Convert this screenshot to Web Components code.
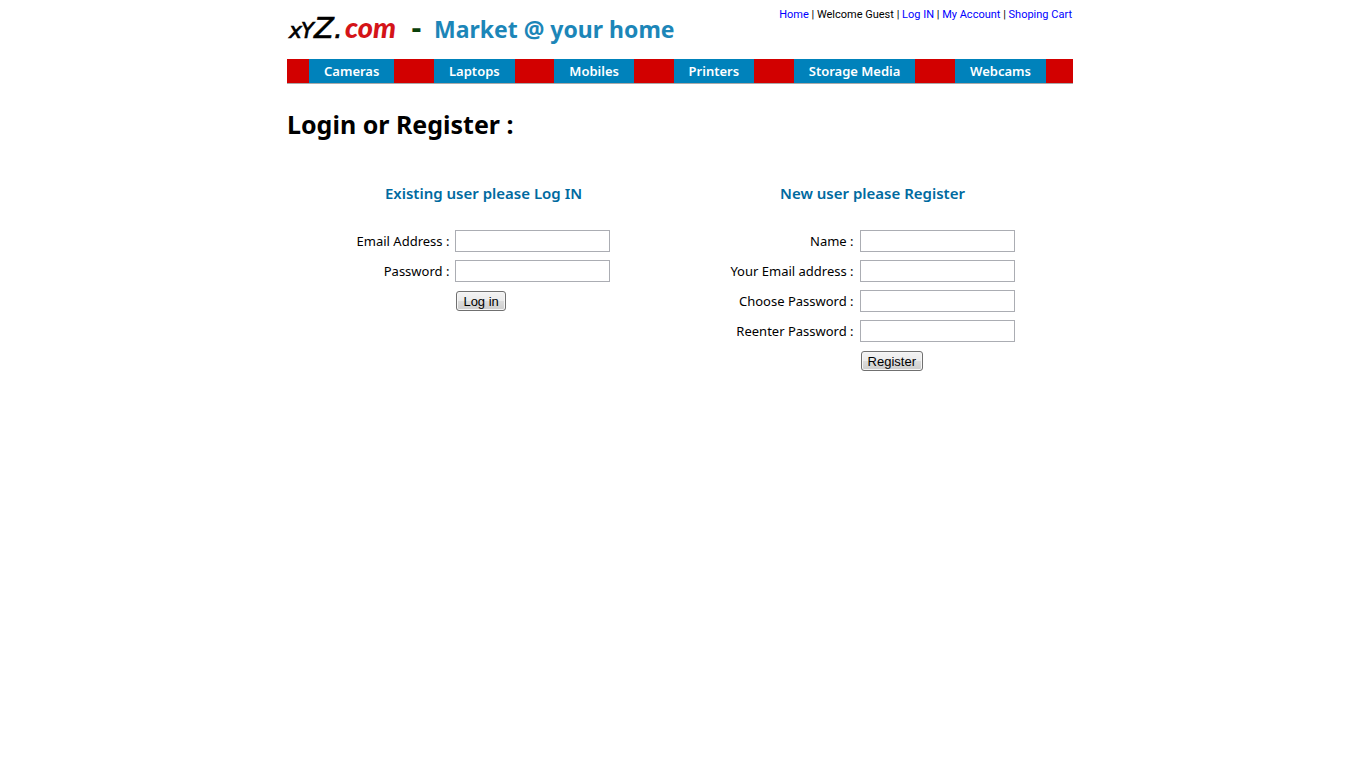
<!DOCTYPE html>
<html lang="en">
<head>
<meta charset="utf-8">
<title>xyZ.com - Login or Register</title>
<style>
body { margin: 0; background: #fff; color: #000; font: 13px/20px "Noto Sans", "Open Sans", sans-serif; }
</style>
</head>
<body>
<shop-page>
  <shop-header slot="header"></shop-header>
  <shop-nav slot="nav"></shop-nav>
  <account-form heading="Existing user please Log IN" action-label="Log in">
    <form-field label="Email Address :" type="text"></form-field>
    <form-field label="Password :" type="password"></form-field>
  </account-form>
  <account-form heading="New user please Register" action-label="Register">
    <form-field label="Name :" type="text"></form-field>
    <form-field label="Your Email address :" type="text"></form-field>
    <form-field label="Choose Password :" type="password"></form-field>
    <form-field label="Reenter Password :" type="password"></form-field>
  </account-form>
</shop-page>

<script>
class ShadowElement extends HTMLElement {
  connectedCallback() {
    if (!this.shadowRoot) this.attachShadow({ mode: "open" }).innerHTML = this.render();
  }
}

customElements.define("shop-page", class extends ShadowElement {
  render() {
    return `<style>
      :host { display: block; max-width: 786px; margin: 0 auto; }
      h1 { margin: 20px 0 39px; font-size: 25px; line-height: 40px; font-weight: 700; }
      .forms { display: grid; grid-template-columns: 1fr 1fr; align-items: start; padding: 0 6px 0 2px; }
    </style>
    <slot name="header"></slot>
    <slot name="nav"></slot>
    <main><h1>Login or Register :</h1><div class="forms"><slot></slot></div></main>`;
  }
});

customElements.define("shop-header", class extends ShadowElement {
  render() {
    return `<style>
      :host { display: flex; justify-content: space-between; align-items: flex-start; height: 59px; }
      .brand { display: flex; align-items: flex-start; line-height: 58px; white-space: nowrap; }
      .logo { width: 124px; height: 59px; }
      .logo text { font-family: "DejaVu Sans", sans-serif; font-style: italic; stroke: currentColor; stroke-width: .7px; }
      .logo .com { font-family: Lato, sans-serif; font-weight: 900; fill: #d41418; stroke: none; }
      .dash { width: 23px; color: #0a400a; font: 700 26px/58px "DejaVu Sans", sans-serif; }
      .tagline { color: #1c86b8; font-size: 23px; font-weight: 700; }
      nav { padding: 5px 1px 0 0; font-size: 11px; white-space: nowrap; font-family: Roboto, sans-serif; }
      a { color: #00f; text-decoration: none; }
    </style>
    <div class="brand">
      <svg class="logo" viewBox="0 0 124 59" role="img" aria-label="xyZ.com">
        <text y="38"><tspan x="2" font-size="22">x</tspan><tspan x="14" font-size="21">Y</tspan><tspan x="27" font-size="29">Z</tspan><tspan x="47" font-size="27">.</tspan><tspan class="com" x="58" font-size="29">com</tspan></text>
      </svg>
      <span class="dash">-</span>
      <span class="tagline">Market @ your home</span>
    </div>
    <nav><a href="#home">Home</a> | Welcome Guest | <a href="#login">Log IN</a> | <a href="#account">My Account</a> | <a href="#cart">Shoping Cart</a></nav>`;
  }
});

customElements.define("shop-nav", class extends ShadowElement {
  render() {
    const items = ["Cameras", "Laptops", "Mobiles", "Printers", "Storage Media", "Webcams"];
    return `<style>
      :host { display: block; border-bottom: 1px solid #aaa; }
      nav { display: flex; justify-content: space-between; padding: 0 27px 0 22px; background: #d20000; }
      a { padding: 0 15px; line-height: 24px; background: #0082bb; color: #fff; font-weight: 600; text-decoration: none; white-space: nowrap; }
    </style>
    <nav>${items.map(t => `<a href="#${t.toLowerCase().replace(" ", "-")}">${t}</a>`).join("")}</nav>`;
  }
});

customElements.define("account-form", class extends ShadowElement {
  render() {
    return `<style>
      :host { display: block; }
      h2 { margin: 0 0 23px; text-align: center; color: #006a9f; font-size: 15px; line-height: 20px; font-weight: 600; }
      form { display: grid; grid-template-columns: auto auto; justify-content: center; align-items: center; column-gap: 6px; grid-auto-rows: 30px; }
      button { grid-column: 2; justify-self: start; box-sizing: border-box; height: 20px; margin-left: 1px; padding: 1px 6px 0;
        border: 1px solid #707070; border-radius: 3px; color: #000; font: 13px/16px "Liberation Sans", Arial, sans-serif;
        background: linear-gradient(#f3f3f3, #ebebeb 50%, #dcdcdc 50%, #cdcdcd); box-shadow: inset 0 0 0 1px #f6f6f6; }
    </style>
    <h2>${this.getAttribute("heading")}</h2>
    <form><slot></slot><button type="submit">${this.getAttribute("action-label")}</button></form>`;
  }
});

customElements.define("form-field", class extends ShadowElement {
  render() {
    return `<style>
      :host { display: contents; }
      label { text-align: right; white-space: nowrap; }
      input { box-sizing: border-box; width: 155px; height: 22px; margin: 0; padding: 1px 3px; border: 1px solid #abadb3; background: #fff; font: inherit; }
    </style>
    <label for="field">${this.getAttribute("label")}</label>
    <input id="field" type="${this.getAttribute("type")}">`;
  }
});
</script>
</body>
</html>
